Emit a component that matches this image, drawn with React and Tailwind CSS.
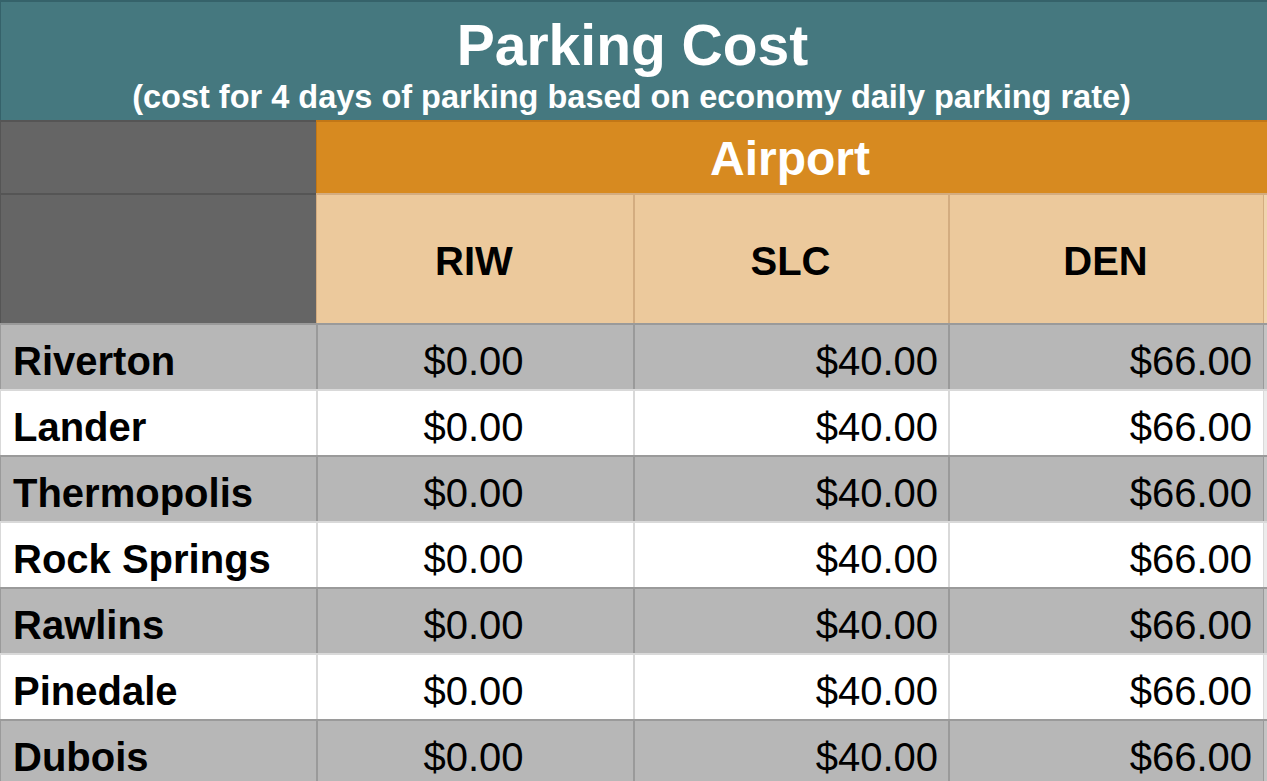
const cities = ["Riverton", "Lander", "Thermopolis", "Rock Springs", "Rawlins", "Pinedale", "Dubois"];

const airports = ["RIW", "SLC", "DEN"];

const DataRow = ({ name, shaded }) => {
    const row = shaded
        ? "bg-[#b7b7b7] border-[#9a9a9a]"
        : "bg-white border-[#d9d9d9]";
    const cell = shaded ? "border-[#9a9a9a]" : "border-[#d9d9d9]";
    return (
        <div className={`flex h-[66px] border-t-2 ${row}`}>
            <div className={`w-[316px] shrink-0 border-l ${cell} flex items-end pb-[8px] pl-[12px] font-bold`}>
                {name}
            </div>
            <div className={`w-[317px] shrink-0 border-l-2 ${cell} flex items-end justify-center pb-[8px] pr-[4px]`}>
                $0.00
            </div>
            <div className={`w-[315px] shrink-0 border-l-2 ${cell} flex items-end justify-end pb-[8px] pr-[10px]`}>
                $40.00
            </div>
            <div className={`w-[315px] shrink-0 border-l-2 ${cell} flex items-end justify-end pb-[8px] pr-[11px]`}>
                $66.00
            </div>
            <div className={`flex-1 border-l ${cell} ${shaded ? "bg-[#c4c4c4]" : "bg-[#ececec]"}`} />
        </div>
    );
};

export default function App() {
    return (
        <div
            className="w-[1267px] h-[781px] overflow-hidden bg-white text-black text-[40px] leading-none"
            style={{ fontFamily: '"Liberation Sans", Arial, sans-serif' }}
        >
            {/* title band */}
            <div className="h-[120px] bg-[#45787f] border-t-2 border-l border-[#35626a] text-white font-bold text-center">
                <div className="pt-[15px] pr-[3px] text-[57px] leading-[57px]">Parking Cost</div>
                <div className="mt-[7px] text-[32.5px] leading-[32px] pr-[5px]">
                    (cost for 4 days of parking based on economy daily parking rate)
                </div>
            </div>

            {/* airport band */}
            <div className="flex h-[73px]">
                <div className="w-[316px] shrink-0 bg-[#656565] border-t-2 border-l border-[#555555]" />
                <div className="flex-1 bg-[#d78a20] border-t-2 border-l border-[#c27716] flex items-center justify-center pt-[3px] pr-[4px] text-white font-bold text-[48px]">
                    Airport
                </div>
            </div>

            {/* airport codes */}
            <div className="flex h-[130px]">
                <div className="w-[316px] shrink-0 bg-[#656565] border-t-2 border-l border-[#555555]" />
                {airports.map((code, i) => (
                    <div
                        key={code}
                        className={`${i === 0 ? "w-[317px] pr-[2px]" : "w-[315px] pr-[2px]"} shrink-0 bg-[#ecc99c] border-t-2 ${i === 0 ? "border-l" : "border-l-2"} border-[#d3ac80] flex items-center justify-center pt-[4px] font-bold`}
                    >
                        {code}
                    </div>
                ))}
                <div className="flex-1 bg-[#f0d4ae] border-t-2 border-l border-[#d3ac80]" />
            </div>

            {cities.map((name, i) => (
                <DataRow key={name} name={name} shaded={i % 2 === 0} />
            ))}
        </div>
    );
}
